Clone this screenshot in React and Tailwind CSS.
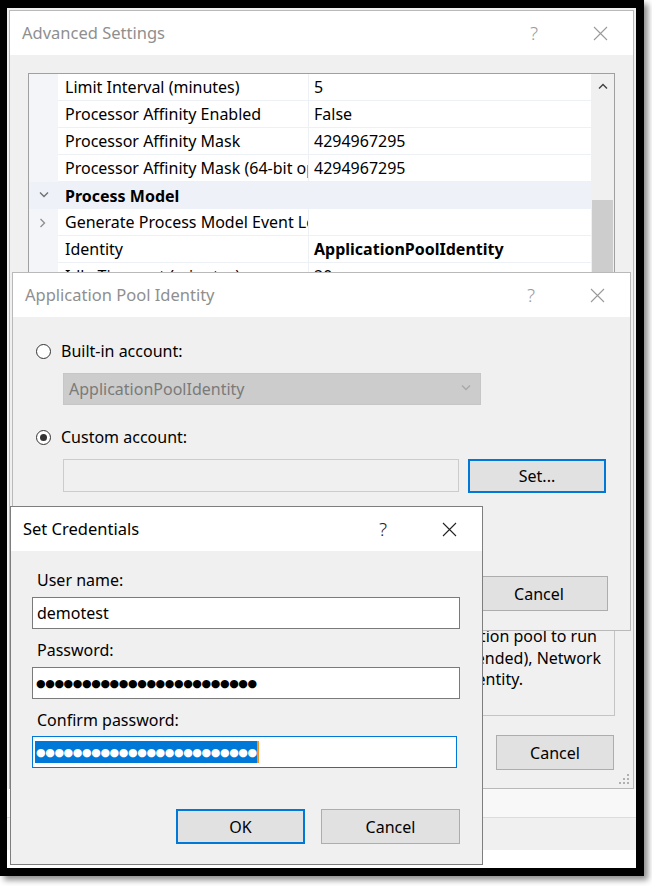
import React from 'react'

const GRID_ROWS = [
  { name: 'Limit Interval (minutes)', value: '5' },
  { name: 'Processor Affinity Enabled', value: 'False' },
  { name: 'Processor Affinity Mask', value: '4294967295' },
  { name: 'Processor Affinity Mask (64-bit option)', value: '4294967295' },
  { name: 'Process Model', category: true },
  { name: 'Generate Process Model Event Log Entry', value: '', expander: true },
  { name: 'Identity', value: 'ApplicationPoolIdentity', bold: true },
  { name: 'Idle Time-out (minutes)', value: '20' },
  { name: 'Idle Time-out Action', value: 'Terminate' },
  { name: 'Load User Profile', value: 'True' },
  { name: 'Maximum Worker Processes', value: '1' },
  { name: 'Ping Enabled', value: 'True' },
]

const MASK = '●'.repeat(24)

function CloseIcon({ color }) {
  return (
    <svg width="15" height="15" viewBox="0 0 15 15" className={color}>
      <path d="M1 1L14 14M14 1L1 14" stroke="currentColor" strokeWidth="1.1" fill="none" />
    </svg>
  )
}

function Chevron({ dir = 'down', className }) {
  const d = {
    down: 'M1 1.5L5 5.5L9 1.5',
    right: 'M1.5 1L5.5 5L1.5 9',
    up: 'M1 5.5L5 1.5L9 5.5',
  }[dir]
  return (
    <svg width="10" height="10" viewBox="0 0 10 10" className={className}>
      <path d={d} stroke="currentColor" strokeWidth="1.4" fill="none" />
    </svg>
  )
}

function Window({ title, active, className, children }) {
  return (
    <div
      className={`absolute flex flex-col border bg-[#f0f0f0] ${
        active ? 'border-[#7e7e7e]' : 'border-[#b9b9b9]'
      } ${className}`}
    >
      <div className="flex h-[44px] shrink-0 items-center bg-white">
        <span className={`flex-1 pl-[12px] text-[16.5px] ${active ? 'text-black' : 'text-[#8f8f8f]'}`}>
          {title}
        </span>
        <span
          className={`flex w-[66px] justify-center text-[19px] font-light ${
            active ? 'text-[#222]' : 'text-[#9a9a9a]'
          }`}
        >
          ?
        </span>
        <span className="flex w-[66px] justify-center">
          <CloseIcon color={active ? 'text-[#222]' : 'text-[#9a9a9a]'} />
        </span>
      </div>
      {children}
    </div>
  )
}

function Button({ children, primary, className }) {
  return (
    <div
      className={`flex items-center justify-center bg-[#e1e1e1] text-[16px] text-black ${
        primary ? 'border-2 border-[#0078d7]' : 'border border-[#adadad]'
      } ${className}`}
    >
      {children}
    </div>
  )
}

function Radio({ checked, label }) {
  return (
    <div className="flex h-[22px] items-center gap-[10px]">
      <span className="flex h-[15px] w-[15px] items-center justify-center rounded-full border border-[#333] bg-white">
        {checked && <span className="h-[7px] w-[7px] rounded-full bg-[#333]" />}
      </span>
      <span className="text-[16px] text-black">{label}</span>
    </div>
  )
}

function PropertyGrid() {
  return (
    <div className="flex h-[530px] border border-[#a0a0a0] bg-white">
      <div className="flex w-[562px] flex-col">
        {GRID_ROWS.map((row) =>
          row.category ? (
            <div key={row.name} className="flex h-[27px] items-center bg-[#eef2f8]">
              <span className="flex w-[29px] justify-center pl-[1px]">
                <Chevron dir="down" className="text-[#707070]" />
              </span>
              <span className="pl-[7px] text-[16px] font-bold text-black">{row.name}</span>
            </div>
          ) : (
            <div key={row.name} className="flex h-[27px]">
              <span className="flex w-[29px] items-center justify-center bg-[#f3f5f9]">
                {row.expander && <Chevron dir="right" className="text-[#909090]" />}
              </span>
              <span className="flex w-[250px] items-center overflow-hidden whitespace-nowrap border-b border-[#edf0f5] pl-[7px] text-[16px] text-black">
                {row.name}
              </span>
              <span
                className={`flex flex-1 items-center overflow-hidden whitespace-nowrap border-b border-l border-[#edf0f5] pl-[5px] text-[16px] text-black ${
                  row.bold ? 'font-bold' : ''
                }`}
              >
                {row.value}
              </span>
            </div>
          )
        )}
      </div>
      <div className="flex w-[23px] flex-col bg-[#f0f0f0]">
        <span className="flex h-[27px] items-center justify-center">
          <Chevron dir="up" className="text-[#404040]" />
        </span>
        <span className="h-[99px]" />
        <span className="mx-[1px] h-[240px] bg-[#cdcdcd]" />
      </div>
    </div>
  )
}

export default function App() {
  return (
    <div className="h-[886px] w-[652px] bg-white font-['Noto_Sans','Open_Sans',sans-serif]">
      <div className="h-[876px] w-[644px] bg-black pl-[7px] pt-[8px] shadow-[4px_4px_6px_rgba(0,0,0,0.45)]">
        <div className="relative flex h-[860px] w-[629px] flex-col overflow-hidden bg-white">
          {/* desktop behind the dialogs */}
          <div className="h-[781px] bg-[#f0f0f0]" />
          <div className="h-[29px] border-b border-[#dcdcdc] bg-[#f8f8f8]" />
          <div className="h-[32px] bg-[#f0f0f0]" />

          {/* Advanced Settings */}
          <Window title="Advanced Settings" className="left-[2px] top-[2px] h-[779px] w-[625px]">
            <div className="flex flex-col px-[18px] pt-[18px]">
              <PropertyGrid />
              <div className="mt-[9px] flex h-[104px] flex-col border border-[#c4c4c4] pt-[13px] text-[16px] leading-[21.5px] text-black">
                <span className="whitespace-nowrap pr-[17px] text-right">[identityType, username, password] Configures the application pool to run</span>
                <span className="whitespace-nowrap pr-[13px] text-right">as built-in account, i.e. Application Pool Identity (recommended), Network</span>
                <span className="whitespace-nowrap pr-[91px] text-right">Service, Local System, Local Service, or as a specific user identity.</span>
              </div>
              <div className="mt-[19px] flex justify-end gap-[14px] pr-[1px]">
                <Button primary className="h-[35px] w-[118px]">OK</Button>
                <Button className="h-[35px] w-[118px]">Cancel</Button>
              </div>
            </div>
            <svg width="11" height="11" viewBox="0 0 11 11" className="absolute bottom-[3px] right-[3px] text-[#b0b0b0]">
              <g fill="currentColor">
                <rect x="8" y="0" width="2" height="2" />
                <rect x="4" y="4" width="2" height="2" />
                <rect x="8" y="4" width="2" height="2" />
                <rect x="0" y="8" width="2" height="2" />
                <rect x="4" y="8" width="2" height="2" />
                <rect x="8" y="8" width="2" height="2" />
              </g>
            </svg>
          </Window>

          {/* Application Pool Identity */}
          <Window title="Application Pool Identity" className="left-[5px] top-[264px] h-[359px] w-[619px]">
            <div className="flex flex-col pl-[23px] pr-[22px] pt-[23px]">
              <Radio label="Built-in account:" />
              <div className="ml-[27px] mt-[11px] flex h-[32px] w-[418px] items-center justify-between border border-[#c6c6c6] bg-[#cccccc] pl-[5px] pr-[9px] text-[16px] text-[#7a7a7a]">
                <span>ApplicationPoolIdentity</span>
                <Chevron dir="down" className="text-[#a8a8a8]" />
              </div>
              <div className="mt-[21px]">
                <Radio checked label="Custom account:" />
              </div>
              <div className="mt-[11px] flex items-start">
                <div className="ml-[27px] h-[33px] w-[396px] border border-[#cccccc] bg-[#f0f0f0]" />
                <Button primary className="ml-[9px] h-[34px] w-[138px]">Set...</Button>
              </div>
              <div className="mt-[83px] flex justify-end gap-[8px]">
                <Button className="h-[35px] w-[138px]">OK</Button>
                <Button className="h-[35px] w-[138px]">Cancel</Button>
              </div>
            </div>
          </Window>

          {/* Set Credentials */}
          <Window active title="Set Credentials" className="left-[3px] top-[498px] h-[359px] w-[473px]">
            <div className="flex flex-col pl-[21px] pr-[22px] pt-[18px] text-[16px] text-black">
              <span className="h-[22px] pl-[5px] leading-[22px]">User name:</span>
              <div className="mt-[6px] flex h-[32px] w-[428px] items-center border border-[#7a7a7a] bg-white pl-[4px]">
                demotest
              </div>
              <span className="mt-[10px] h-[22px] pl-[5px] leading-[22px]">Password:</span>
              <div className="mt-[6px] flex h-[32px] w-[428px] items-center border border-[#7a7a7a] bg-white pl-[3px]">
                <span className="font-['DejaVu_Sans',sans-serif] text-[11px] leading-none tracking-[-0.4px]">{MASK}</span>
              </div>
              <span className="mt-[10px] h-[22px] pl-[5px] leading-[22px]">Confirm password:</span>
              <div className="mt-[5px] flex h-[32px] w-[425px] items-center border border-[#0078d7] bg-white pl-[2px]">
                <span className="flex h-[22px] items-center bg-[#0078d7] pl-[1px] font-['DejaVu_Sans',sans-serif] text-[11px] leading-none tracking-[-0.4px] text-white">
                  {MASK}
                </span>
                <span className="h-[22px] w-[2px] bg-[#f7941d]" />
              </div>
              <div className="mt-[41px] flex justify-end gap-[16px]">
                <Button primary className="h-[35px] w-[129px]">OK</Button>
                <Button className="h-[35px] w-[139px]">Cancel</Button>
              </div>
            </div>
          </Window>
        </div>
      </div>
    </div>
  )
}
